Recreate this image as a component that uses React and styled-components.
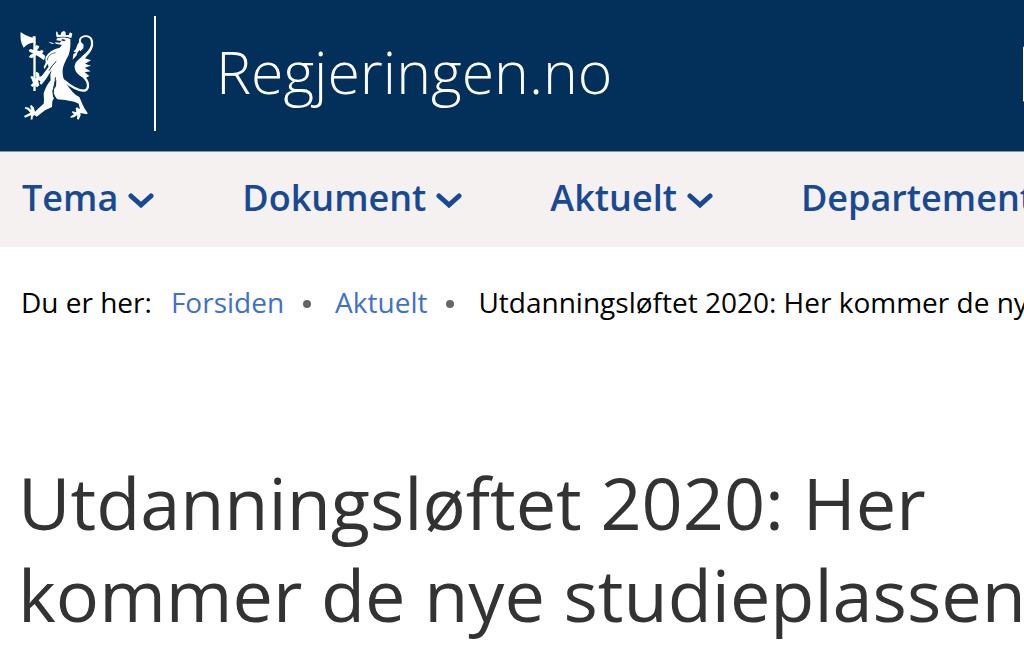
import React from 'react';
import styled, { createGlobalStyle } from 'styled-components';

const GlobalStyle = createGlobalStyle`
  * {
    box-sizing: border-box;
  }

  body {
    margin: 0;
    background-color: #fff;
    font-family: 'Open Sans', 'Noto Sans', sans-serif;
    overflow: hidden;
  }
`;

const Header = styled.header`
  display: flex;
  align-items: center;
  padding: 16px 0 20px 20px;
  background-color: #032f5b;
  border-bottom: 1px solid #8196ad;
  overflow: hidden;
`;

const Brand = styled.a`
  display: flex;
  align-items: center;
  color: #fff;
  text-decoration: none;
`;

const Crest = styled.svg`
  width: 74px;
  height: 90px;
  margin-top: 3px;
`;

const Wordmark = styled.span`
  margin-left: 60px;
  padding: 0 0 4px 60px;
  border-left: 2px solid #fff;
  font-size: 59px;
  font-weight: 300;
  line-height: 111px;
`;

/* Starts at the right edge of the window and runs out of it */
const SearchButton = styled.button`
  flex: none;
  width: 120px;
  height: 56px;
  margin-left: auto;
  margin-right: -119px;
  background-color: transparent;
  border: 2px solid #fff;
  border-radius: 2px;
`;

const Nav = styled.nav`
  background-color: #f5f1f0;
  overflow: hidden;
`;

const NavList = styled.ul`
  display: flex;
  gap: 88px;
  margin: 0;
  padding: 0 22px 4px;
  list-style: none;
`;

const NavButton = styled.button`
  display: flex;
  align-items: center;
  gap: 10px;
  padding: 0;
  border: 0;
  background: none;
  color: #174994;
  font-family: inherit;
  font-size: 36px;
  font-weight: 600;
  line-height: 91px;
  white-space: nowrap;
  cursor: pointer;
`;

const Chevron = styled.svg`
  flex: none;
  width: 26px;
  height: 16px;
  margin-top: 6px;
`;

const Breadcrumbs = styled.nav`
  display: flex;
  padding: 31px 21px;
  color: #000;
  font-size: 28px;
  line-height: 48px;
  white-space: nowrap;
`;

const CrumbList = styled.ol`
  display: flex;
  margin: 0 0 0 19px;
  padding: 0;
  list-style: none;
`;

const Crumb = styled.li`
  display: flex;
  align-items: center;

  &:not(:last-child)::after {
    content: '';
    width: 8px;
    height: 8px;
    margin: 4px 24px 0 19px;
    border-radius: 50%;
    background-color: #666;
  }
`;

const CrumbLink = styled.a`
  color: #4170c9;
  text-decoration: none;
`;

const Title = styled.h1`
  margin: 99px 0 0;
  padding-left: 18px;
  color: #333;
  font-size: 72px;
  font-weight: 400;
  line-height: 92px;
  white-space: nowrap;
`;

const menuItems = ['Tema', 'Dokument', 'Aktuelt', 'Departementer'];

const Lion = () => (
  <Crest viewBox="30 60 222 270" fill="#fff" aria-hidden="true">
    {/* axe */}
    <path d="M32 66 C43 74 56 81 68 83 L68 79 L77 79 L77 98 L68 98 C59 98 49 105 41 113 C32 99 30 82 32 66 Z" />
    <path d="M70 96 H77 V243 H70 Z" />
    {/* crown and head */}
    <path d="M139 64 L144 68 L143 73 L151 76 L155 66 L162 63 L167 67 L167 76 L176 75 L180 67 L187 71 L184 84 C169 79 154 79 140 82 L138 72 Z" />
    <path d="M141 85 C153 81 169 82 181 87 C182 103 181 119 176 135 C166 154 157 170 158 187 C158 207 166 217 176 231 C184 242 193 254 208 261 C215 276 220 293 233 309 L231 313 L211 309 L212 316 L206 329 L201 327 L202 315 L192 322 L182 323 L181 320 L192 313 L185 306 L188 304 L199 307 L197 295 L201 292 L210 298 L206 281 C194 273 180 274 166 270 L142 268 L134 259 L130 250 L132 238 L138 229 L139 210 L134 214 L133 231 L127 242 L129 260 L132 264 L127 274 L126 291 L105 301 L80 320 L74 315 L68 320 L68 328 L62 329 L63 316 L45 323 L42 318 L61 308 L53 299 L44 295 L46 291 L56 293 L64 300 L60 288 L64 285 L71 292 L75 305 L84 296 L101 281 L102 270 L101 250 C106 235 112 222 122 211 L121 194 L125 180 L108 207 L94 224 L89 220 L91 213 L84 211 L88 226 L81 232 L73 225 L67 231 L62 226 L69 219 L65 208 L61 200 L67 198 L74 207 L79 203 L76 191 L80 185 L87 190 L89 201 L98 196 L112 177 L124 162 L112 162 L104 178 L101 171 L107 158 L106 145 C112 130 124 122 136 117 L149 113 L156 105 L137 101 L135 97 L150 98 L154 93 L139 91 Z" />
    <path d="M108 153 L136 128 L140 150 L119 181 L98 209 L96 197 L116 170 Z" />
    <path d="M115 95 L127 98 L134 102 L124 101 Z" />
    <path d="M157 87 L168 90 L162 94 L153 91 Z" fill="#032f5b" />
    {/* raised fore leg */}
    <path d="M80 105 L88 109 L85 116 L80 121 L89 123 L96 119 L101 125 L96 130 L106 138 L102 151 L88 141 L79 136 L72 139 L66 145 L56 141 L62 134 L70 130 L59 126 L56 120 L63 117 L72 121 L74 112 Z" />
    <path d="M112 151 C112 140 122 130 137 128" fill="none" stroke="#032f5b" strokeWidth="2" />
    <path d="M139 154 C130 162 124 171 117 182" fill="none" stroke="#032f5b" strokeWidth="3" />
    <path d="M136 202 C138 220 128 231 130 244 C130 253 134 259 137 265" fill="none" stroke="#032f5b" strokeWidth="3" />
    {/* tail */}
    <path
      d="M161 211 C181 228 202 240 219 242 C239 243 238 216 222 202"
      fill="none"
      stroke="#fff"
      strokeWidth="7"
    />
    <path d="M207 97 C205 83 215 76 228 76 C246 77 252 91 249 108 C246 123 234 134 225 145 L243 151 L225 161 L243 167 L224 173 L242 184 L224 187 L238 198 L226 205 C214 202 196 190 194 173 C193 160 202 151 211 144 C221 133 238 122 242 107 C246 89 238 80 226 81 C216 82 211 87 213 96 L221 104 L220 115 L211 124 L209 120 L203 127 L200 136 L188 149 L190 133 L199 126 L190 125 L198 116 L202 104 Z" />
  </Crest>
);

const App = () => {
  return (
    <>
      <GlobalStyle />
      <Header>
        <Brand href="#">
          <Lion />
          <Wordmark>Regjeringen.no</Wordmark>
        </Brand>
        <SearchButton type="button" aria-label="Søk" />
      </Header>

      <Nav aria-label="Hovedmeny">
        <NavList>
          {menuItems.map((item) => (
            <li key={item}>
              <NavButton type="button">
                {item}
                <Chevron viewBox="0 0 26 16" aria-hidden="true">
                  <path d="M3 3 L13 12 L23 3" fill="none" stroke="currentColor" strokeWidth="5" strokeLinecap="round" />
                </Chevron>
              </NavButton>
            </li>
          ))}
        </NavList>
      </Nav>

      <Breadcrumbs aria-label="Brødsmulesti">
        <span>Du er her:</span>
        <CrumbList>
          <Crumb><CrumbLink href="#">Forsiden</CrumbLink></Crumb>
          <Crumb><CrumbLink href="#">Aktuelt</CrumbLink></Crumb>
          <Crumb>Utdanningsløftet 2020: Her kommer de nye studieplassene</Crumb>
        </CrumbList>
      </Breadcrumbs>

      <main>
        <Title>
          Utdanningsløftet 2020: Her
          <br />
          kommer de nye studieplassene
        </Title>
      </main>
    </>
  );
};

export default App;
